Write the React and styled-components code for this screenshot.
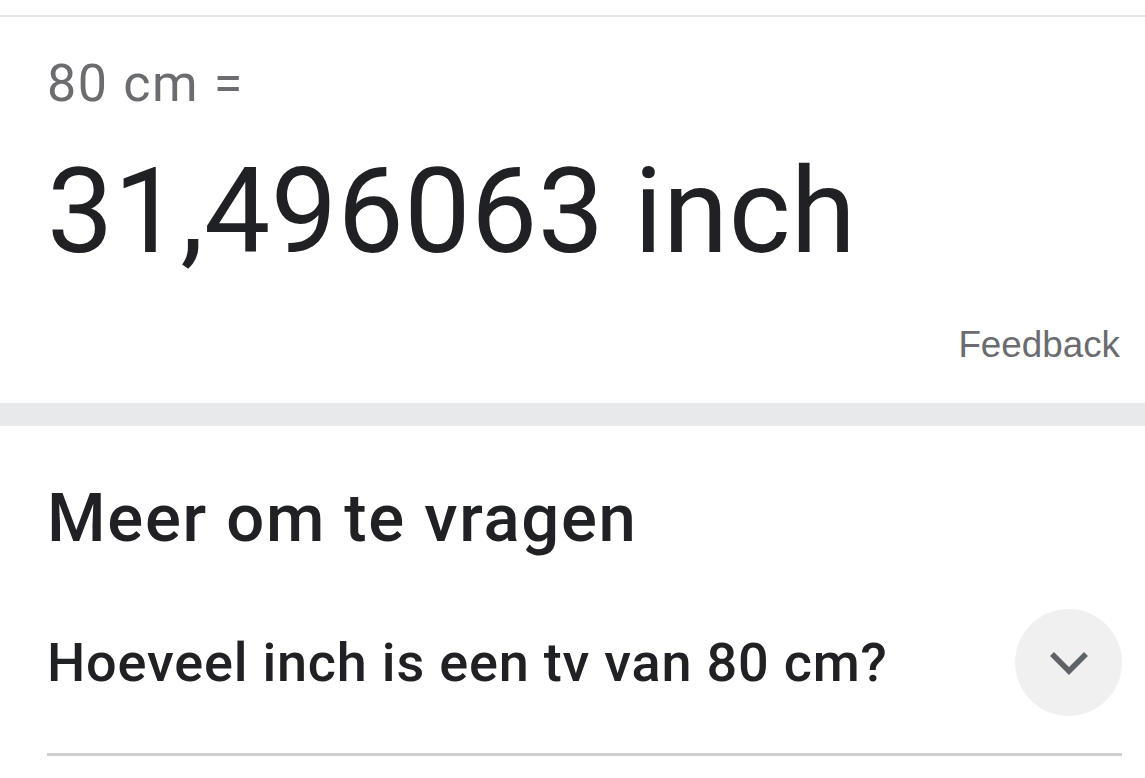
import React from "react";
import styled, { createGlobalStyle } from "styled-components";

const Global = createGlobalStyle`
  html, body { margin: 0; padding: 0; background: #fff; }
  body { font-family: Roboto, "Noto Sans", sans-serif; -webkit-font-smoothing: antialiased; }
`;

const Page = styled.div`
  width: 1145px;
  height: 778px;
  overflow: hidden;
  padding-top: 15px;
  box-sizing: border-box;
`;

const TopRule = styled.div`
  height: 2px;
  background: #e8e8e8;
`;

const Card = styled.section`
  padding: 37px 25px 0 47px;
  display: flex;
  flex-direction: column;
`;

const Query = styled.div`
  font-size: 52px;
  line-height: 60px;
  letter-spacing: 1.6px;
  color: #6a6c6f;
`;

const Result = styled.div`
  margin-top: 33px;
  font-size: 118px;
  line-height: 130px;
  letter-spacing: 0.4px;
  color: #202124;
`;

const FeedbackRow = styled.div`
  display: flex;
  justify-content: flex-end;
  margin-top: 48px;
  height: 78px;
`;

const Feedback = styled.span`
  font-family: "Liberation Sans", Arial, sans-serif;
  font-size: 36.8px;
  line-height: 40px;
  color: #6a6c6f;
`;

const Band = styled.div`
  height: 23px;
  background: #e8e9eb;
`;

const Section = styled.section`
  padding: 52px 23px 0 47px;
`;

const Heading = styled.h2`
  margin: 0;
  font-weight: 500;
  font-size: 67px;
  line-height: 80px;
  letter-spacing: 1.7px;
  color: #202124;
`;

const Question = styled.div`
  margin-top: 51px;
  display: flex;
  align-items: center;
  justify-content: space-between;
  padding-bottom: 37px;
  border-bottom: 3px solid #d0d0d0;
`;

const QuestionText = styled.span`
  font-weight: 500;
  font-size: 54px;
  line-height: 64px;
  letter-spacing: 0.8px;
  color: #202124;
`;

const ExpandButton = styled.div`
  width: 107px;
  height: 107px;
  border-radius: 50%;
  background: #f0f0f1;
  display: flex;
  align-items: center;
  justify-content: center;
`;

export default function App() {
  return (
    <>
      <Global />
      <Page>
        <TopRule />
        <Card>
          <Query>80 cm =</Query>
          <Result>31,496063 inch</Result>
          <FeedbackRow>
            <Feedback>Feedback</Feedback>
          </FeedbackRow>
        </Card>
        <Band />
        <Section>
          <Heading>Meer om te vragen</Heading>
          <Question>
            <QuestionText>Hoeveel inch is een tv van 80 cm?</QuestionText>
            <ExpandButton>
              <svg width="42" height="26" viewBox="0 0 42 26">
                <path d="M4 4 L21 21 L38 4" fill="none" stroke="#5f6368" strokeWidth="5.5" strokeLinecap="butt" strokeLinejoin="miter" />
              </svg>
            </ExpandButton>
          </Question>
        </Section>
      </Page>
    </>
  );
}
